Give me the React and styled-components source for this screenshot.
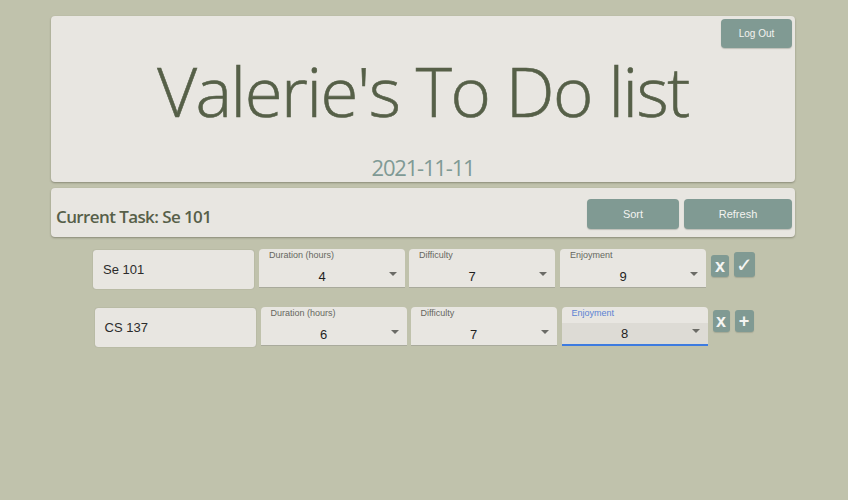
import React from "react";
import styled, { createGlobalStyle } from "styled-components";

const Global = createGlobalStyle`
  html, body { margin: 0; padding: 0; }
  body {
    background: #c0c2ac;
    font-family: "Liberation Sans", Arial, sans-serif;
    width: 848px;
    height: 500px;
    overflow: hidden;
  }
`;

const Page = styled.div`
  padding: 16px 53px 0 51px;
  display: flex;
  flex-direction: column;
`;

const Card = styled.div`
  background: #e8e6e1;
  border-radius: 4px;
  box-shadow: 0 1px 2px rgba(70, 72, 55, 0.45);
`;

const Header = styled(Card)`
  height: 166px;
  display: flex;
  flex-direction: column;
  align-items: center;
  box-sizing: border-box;
  padding-top: 3px;
`;

const TopRow = styled.div`
  align-self: stretch;
  display: flex;
  justify-content: flex-end;
  padding-right: 3px;
`;

const Btn = styled.button`
  background: #809a93;
  color: #f3f3f0;
  border: none;
  border-radius: 4px;
  font-family: "Liberation Sans", Arial, sans-serif;
  font-size: ${(p) => p.$fs || 10}px;
  width: ${(p) => p.$w}px;
  height: ${(p) => p.$h}px;
  padding: 0;
  box-shadow: 0 1px 1px rgba(60, 70, 60, 0.25);
`;

const Title = styled.h1`
  margin: 0;
  margin-top: 2px;
  font-family: "Open Sans", sans-serif;
  font-weight: 300;
  font-size: 69px;
  line-height: 80px;
  letter-spacing: -1.5px;
  color: #566048;
  -webkit-text-stroke: 0.6px #566048;
`;

const DateText = styled.div`
  margin-top: 24px;
  font-family: "Open Sans", sans-serif;
  font-size: 22px;
  line-height: 26px;
  color: #7f9a95;
  letter-spacing: -1.2px;
`;

const TaskBar = styled(Card)`
  margin-top: 6px;
  height: 49px;
  display: flex;
  align-items: center;
  padding: 0 3px 0 5px;
`;

const TaskTitle = styled.div`
  flex: 1;
  font-family: "Open Sans", sans-serif;
  font-weight: 600;
  font-size: 17px;
  color: #575f49;
  padding-top: 8px;
  letter-spacing: -0.6px;
`;

const BarButtons = styled.div`
  display: flex;
  gap: 5px;
  padding-top: 2px;
`;

const Rows = styled.div`
  display: flex;
  flex-direction: column;
  gap: 18px;
  margin-top: 12px;
  margin-left: -51px;
  margin-right: -53px;
`;

const Row = styled.div`
  display: flex;
  justify-content: center;
  align-items: flex-start;
`;

const TextBox = styled.div`
  width: 161px;
  height: 39px;
  box-sizing: border-box;
  margin-top: 1px;
  background: #e8e6e1;
  border-radius: 3px;
  box-shadow: 0 0 1px rgba(90, 95, 80, 0.6);
  display: flex;
  align-items: center;
  padding: 0 10px;
  font-size: 13px;
  color: #2b2b2b;
  margin-right: 5px;
`;

const SelectBox = styled.div`
  position: relative;
  width: 146px;
  height: 39px;
  box-sizing: border-box;
  background: #e8e6e1;
  border-top-left-radius: 4px;
  border-top-right-radius: 4px;
  border-bottom: ${(p) => (p.$focused ? "2px solid #3d7be0" : "1px solid #a9aa9c")};
  margin-right: ${(p) => p.$mr}px;
  overflow: hidden;
  display: flex;
  flex-direction: column;
`;

const Label = styled.div`
  font-size: 9px;
  line-height: 11px;
  color: ${(p) => (p.$focused ? "#5a83d3" : "#66665f")};
  padding: 1px 0 0 10px;
  height: 12px;
`;

const ValueArea = styled.div`
  flex: 1;
  display: flex;
  align-items: center;
  background: ${(p) => (p.$focused ? "#dddbd5" : "transparent")};
  padding: 0 32px 0 12px;
  font-size: 13px;
  color: #1f1f1f;
  justify-content: center;
  margin-top: 3px;
`;

const Arrow = styled.div`
  position: absolute;
  right: 8px;
  bottom: 11px;
  width: 0;
  height: 0;
  border-left: 4px solid transparent;
  border-right: 4px solid transparent;
  border-top: 4px solid #6b6b66;
`;

const Actions = styled.div`
  display: flex;
  align-items: flex-end;
  gap: 5px;
  margin-left: 5px;
  margin-top: 3px;
`;

const SmallBtn = styled.div`
  width: ${(p) => p.$w}px;
  height: ${(p) => p.$h}px;
  background: #809a93;
  border-radius: 3px;
  color: #f5f5f2;
  font-family: ${(p) => p.$font || '"Liberation Sans", Arial, sans-serif'};
  font-size: ${(p) => p.$fs}px;
  font-weight: ${(p) => p.$fw || 400};
  display: flex;
  align-items: center;
  justify-content: center;
  box-shadow: 0 1px 1px rgba(60, 70, 60, 0.2);
`;

function Select({ label, value, focused, mr }) {
  return (
    <SelectBox $focused={focused} $mr={mr}>
      <Label $focused={focused}>{label}</Label>
      <ValueArea $focused={focused}>{value}</ValueArea>
      <Arrow />
    </SelectBox>
  );
}

export default function App() {
  return (
    <>
      <Global />
      <Page>
        <Header>
          <TopRow>
            <Btn $w={71} $h={29}>Log Out</Btn>
          </TopRow>
          <Title>Valerie's To Do list</Title>
          <DateText>2021-11-11</DateText>
        </Header>
        <TaskBar>
          <TaskTitle>Current Task: Se 101</TaskTitle>
          <BarButtons>
            <Btn $w={92} $h={30} $fs={11}>Sort</Btn>
            <Btn $w={108} $h={30} $fs={11}>Refresh</Btn>
          </BarButtons>
        </TaskBar>
        <Rows>
          <Row>
            <TextBox>Se 101</TextBox>
            <Select label="Duration (hours)" value="4" mr={4} />
            <Select label="Difficulty" value="7" mr={5} />
            <Select label="Enjoyment" value="9" mr={0} />
            <Actions>
              <SmallBtn $w={18} $h={22} $fs={18} $fw={700}>x</SmallBtn>
              <SmallBtn $w={21} $h={25} $fs={20} $font='"DejaVu Sans", sans-serif'>✓</SmallBtn>
            </Actions>
          </Row>
          <Row>
            <TextBox>CS 137</TextBox>
            <Select label="Duration (hours)" value="6" mr={4} />
            <Select label="Difficulty" value="7" mr={5} />
            <Select label="Enjoyment" value="8" focused mr={0} />
            <Actions>
              <SmallBtn $w={17} $h={22} $fs={18} $fw={700}>x</SmallBtn>
              <SmallBtn $w={19} $h={22} $fs={18} $fw={700}>+</SmallBtn>
            </Actions>
          </Row>
        </Rows>
      </Page>
    </>
  );
}
